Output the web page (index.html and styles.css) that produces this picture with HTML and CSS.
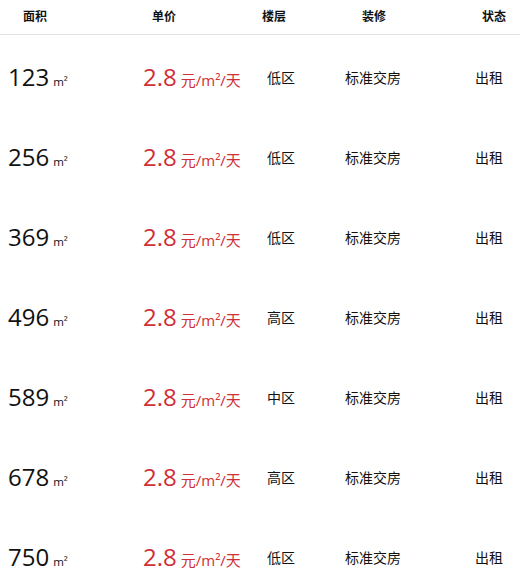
FILE: index.html
```html
<!DOCTYPE html>
<html lang="zh">
<head>
  <meta charset="UTF-8" />
  <meta name="viewport" content="width=device-width, initial-scale=1" />
  <title>房源列表</title>
  <link rel="stylesheet" href="styles.css">
</head>
<body>
  <div class="tabla">
    <div class="cabecera">
      <span>面积</span>
      <span>单价</span>
      <span>楼层</span>
      <span>装修</span>
      <span class="h-estado">状态</span>
    </div>

    <div class="cuerpo">
      <div class="fila">
        <span class="area">123<small>m²</small></span>
        <span class="precio">2.8<small>元/m²/天</small></span>
        <span class="piso">低区</span>
        <span class="deco">标准交房</span>
        <span class="estado">出租</span>
      </div>
      <div class="fila">
        <span class="area">256<small>m²</small></span>
        <span class="precio">2.8<small>元/m²/天</small></span>
        <span class="piso">低区</span>
        <span class="deco">标准交房</span>
        <span class="estado">出租</span>
      </div>
      <div class="fila">
        <span class="area">369<small>m²</small></span>
        <span class="precio">2.8<small>元/m²/天</small></span>
        <span class="piso">低区</span>
        <span class="deco">标准交房</span>
        <span class="estado">出租</span>
      </div>
      <div class="fila">
        <span class="area">496<small>m²</small></span>
        <span class="precio">2.8<small>元/m²/天</small></span>
        <span class="piso">高区</span>
        <span class="deco">标准交房</span>
        <span class="estado">出租</span>
      </div>
      <div class="fila">
        <span class="area">589<small>m²</small></span>
        <span class="precio">2.8<small>元/m²/天</small></span>
        <span class="piso">中区</span>
        <span class="deco">标准交房</span>
        <span class="estado">出租</span>
      </div>
      <div class="fila">
        <span class="area">678<small>m²</small></span>
        <span class="precio">2.8<small>元/m²/天</small></span>
        <span class="piso">高区</span>
        <span class="deco">标准交房</span>
        <span class="estado">出租</span>
      </div>
      <div class="fila">
        <span class="area">750<small>m²</small></span>
        <span class="precio">2.8<small>元/m²/天</small></span>
        <span class="piso">低区</span>
        <span class="deco">标准交房</span>
        <span class="estado">出租</span>
      </div>
    </div>
  </div>
</body>
</html>
```

FILE: styles.css
```css
body { margin: 0; padding: 0; background: #fff; color: #111; font-family: "Open Sans", "Noto Sans CJK SC", sans-serif; overflow: hidden; }
.tabla { width: 520px; }
.cabecera { display: grid; grid-template-columns: 70px 188px 32px 168px 1fr; height: 34px; align-items: center; border-bottom: 1px solid #e3e3e3; font-size: 12px; font-weight: bold; text-align: center; }
.cabecera span { line-height: 1; }
.h-estado { padding-left: 10px; }
.cuerpo { padding-top: 2px; }
.fila { display: grid; grid-template-columns: 143px 115px 46px 140px 1fr; height: 80px; align-items: center; font-size: 14px; }
.area { padding-left: 8px; font-size: 24px; line-height: 1; }
.area small { font-size: 11.5px; margin-left: 4px; }
.precio { color: #cf3035; font-size: 24px; line-height: 1; }
.precio small { font-size: 15px; margin-left: 4px; }
.piso { text-align: center; }
.deco { text-align: center; margin-left: -2px; }
.estado { padding-left: 14px; text-align: center; }
```
